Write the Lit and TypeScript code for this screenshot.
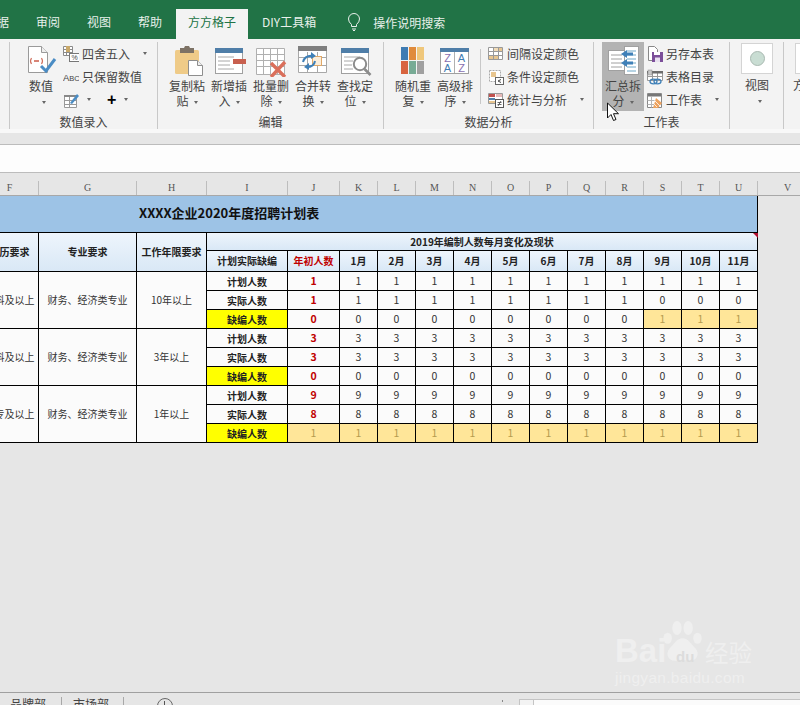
import { LitElement, css, html, svg } from "lit";
import { customElement } from "lit/decorators.js";

const arrow = html`<i class="arrow"></i>`;

/** Ribbon icons, keyed by name. Coordinates are screen pixels inside the icon box. */
const bigIcons = {
  value: svg`<path d="M6.5 1.5h13l6 6v20h-19z" fill="#fff" stroke="#9a9a9a"/><path d="M19.5 1.5v6h6" fill="#eee" stroke="#9a9a9a"/>
    <path d="M9.5 13q-2 3 0 6M19.5 13q2 3 0 6" fill="none" stroke="#d0705f" stroke-width="1.2"/><path d="M12 16h5" stroke="#c8503c" stroke-width="1.4"/>
    <path d="M19 21l5 5 9-12" fill="none" stroke="#4a8cc4" stroke-width="3"/>`,
  paste: svg`<g transform="translate(5 1)"><rect x="2" y="4" width="24" height="24" rx="1.5" fill="#efcb88"/><path d="M7 2h4l1-2h4l1 2h4v5H7z" fill="#7d7265"/>
    <path d="M15.500 14.500h9l5 5v10h-14z" fill="#fff" stroke="#8e8e8e"/><path d="M24.500 14.500v5h5" fill="#eee" stroke="#8e8e8e"/></g>`,
  insert: svg`<rect x="5.5" y="3.5" width="27" height="25" fill="#fff" stroke="#a0a0a0"/><rect x="5" y="3" width="28" height="5" fill="#4f7ea8"/>
    <path d="M8 12h16M8 16h12M8 20h12M8 24h16" stroke="#a8a8a8"/><rect x="23" y="14" width="13" height="5" fill="#c8604f"/>`,
  remove: svg`<path d="M4.5 3.500h28v26h-28zM4.5 9.500h28M4.5 15.500h28M4.5 21.500h28M11.500 3.500v26M18.500 3.500v26M25.500 3.500v26" fill="#fff" stroke="#b0b0b0"/>
    <path d="M19 18l14 14M33 17L19 32" stroke="#da6f5b" stroke-width="3.4" fill="none"/>`,
  merge: svg`<path d="M4.500 2.500h28v25h-28zM4.500 12.500h28M4.500 20.500h28M13.500 7v20.500M23.500 7v20.500" fill="#fff" stroke="#a8a8a8"/><rect x="4" y="1" width="29" height="5" fill="#7f7f7f"/>
    <rect x="18.500" y="11.500" width="9" height="9" fill="#fbeedb" stroke="#e0a868"/>
    <path d="M9 17q2-7 10-6" fill="none" stroke="#3f80b8" stroke-width="2"/><path d="M17 7l5 4-5 3z" fill="#3f80b8"/>
    <path d="M21 16q-1 6-8 6" fill="none" stroke="#3f80b8" stroke-width="2"/><path d="M15 18l-5 4 5 3z" fill="#3f80b8"/>`,
  find: svg`<rect x="5.500" y="3.500" width="27" height="25" fill="#fff" stroke="#a0a0a0"/><rect x="5" y="3" width="28" height="5" fill="#4f7ea8"/>
    <path d="M8 12h16M8 16h9M8 20h8M8 24h9" stroke="#a8a8a8"/><circle cx="24" cy="19" r="6.200" fill="#fff" stroke="#8c8c8c" stroke-width="2"/>
    <path d="M28.500 24l6 6" stroke="#8c8c8c" stroke-width="2.600"/>`,
  shuffle: svg`<rect x="7" y="2" width="7" height="13" fill="#3f7cb3"/><rect x="15" y="2" width="7" height="13" fill="#e08b3c"/><rect x="23" y="2" width="7" height="13" fill="#efc77b"/>
    <rect x="7" y="16" width="7" height="13" fill="#d8643f"/><rect x="15" y="16" width="7" height="13" fill="#78ab95"/><rect x="23" y="16" width="7" height="13" fill="#a0a0a0"/>`,
  sort: svg`<rect x="4.500" y="3.500" width="28" height="25" fill="#fff" stroke="#a0a0a0"/><rect x="4" y="3" width="29" height="4" fill="#4f7ea8"/><path d="M18.500 7v21" stroke="#b0b0b0"/>
    <g font-family="Liberation Sans" font-size="11" text-anchor="middle"><text x="11.500" y="16.500" fill="#8a6fb0">Z</text><text x="25.500" y="16.500" fill="#3f7cb3">A</text><text x="11.500" y="27" fill="#3f7cb3">A</text><text x="25.500" y="27" fill="#8a6fb0">Z</text></g>`,
  split: svg`<rect x="4.500" y="5.500" width="16" height="20" fill="#fff" stroke="#a0a0a0"/><path d="M7 10h11M7 14h11M7 18h11M7 22h11" stroke="#a0a0a0"/>
    <rect x="20.500" y="1.500" width="14" height="28" fill="#fff" stroke="#a0a0a0"/><path d="M23 6h9M23 10h9M23 14h9M23 18h9M23 22h9M23 26h9" stroke="#6fa8c8"/>
    <path d="M29 9h-8M29 18h-8" stroke="#3f80b8" stroke-width="3"/><path d="M23 5l-6 4 6 4zM23 14l-6 4 6 4z" fill="#3f80b8"/>`,
};

const smallIcons = {
  round: svg`<path d="M.5.5h9v9h-9zM.5 3.500h9M.5 6.500h9M3.500.500v9M6.500.500v9" fill="#fff" stroke="#8a8a8a"/><rect x="3" y="0" width="4" height="6" fill="#c9a96a"/>
    <rect x="6.500" y="7.500" width="10" height="8" fill="#fff" stroke="#777"/><text x="11.500" y="14" font-size="7" font-family="Liberation Sans" text-anchor="middle" fill="#444">%</text>`,
  abc: svg`<text x="0" y="12" font-size="9.500" font-family="Liberation Sans" fill="#444">A<tspan font-size="7.500">BC</tspan></text>`,
  edit: svg`<path d="M1.500 4.500h12v11h-12zM1.500 8.500h12M1.500 12.500h12M6.500 4.500v11" fill="#fff" stroke="#999"/><rect x="1" y="3" width="13" height="2" fill="#888"/>
    <path d="M7 11l7-9 2 2-7 8z" fill="#4a8cc4"/>`,
  banded: svg`<path d="M.5 1.500h14v12H.5zM.5 5.500h14M.5 9.500h14M5.500 1.500v12M10.500 1.500v12" fill="#fff" stroke="#999"/><rect x="1" y="10" width="4" height="3" fill="#e8c690"/><rect x="6" y="10" width="4" height="3" fill="#e8c690"/><rect x="11" y="2" width="3" height="3" fill="#e8c690"/><rect x="6" y="2" width="4" height="3" fill="#f1dcb8"/>`,
  rule: svg`<path d="M1.500 1.500h11v11h-11z" fill="#fff" stroke="#aaa" stroke-dasharray="2 1"/><rect x="3" y="3" width="5" height="5" fill="#e8c690"/><rect x="7.500" y="8.500" width="8" height="7" fill="#fff" stroke="#666"/><path d="M13 10.500l-3 1.500 3 1.500" fill="none" stroke="#444"/>`,
  stats: svg`<path d="M.5 1.500h14v10H.5z" fill="#fff" stroke="#999"/><rect x="1" y="2" width="6" height="3" fill="#c0504d"/><rect x="8" y="2" width="6" height="3" fill="#e6b8b7"/><rect x="1" y="6" width="6" height="2" fill="#4f7ea8"/><rect x="1" y="9" width="6" height="2" fill="#e8c690"/>
    <rect x="7.500" y="7.500" width="8" height="8" fill="#fff" stroke="#555"/><path d="M9.500 10.500h4M9.500 12.500h4M10 14l3-5" stroke="#444" stroke-width=".8" fill="none"/>`,
  saveAs: svg`<path d="M1.500.500h6l3 3v11h-9z" fill="#fff" stroke="#888"/><rect x="5" y="6" width="11" height="10" fill="#7c4f9a"/><rect x="7" y="6" width="6" height="3" fill="#fff"/><rect x="8" y="11.500" width="5" height="4.500" fill="#e8e0ef"/>`,
  catalog: svg`<path d="M.5 2.500h15v9H.5zM.5 7.500h15M5.500 2.500v9M10.500 2.500v9" fill="#fff" stroke="#999"/><rect x="0" y="2" width="16" height="2.500" fill="#6d6d6d"/><rect x="1" y="1" width="4" height="5" fill="#c8c8c8" stroke="#888" stroke-width=".5"/>
    <ellipse cx="6.500" cy="12.500" rx="3.500" ry="2.300" fill="none" stroke="#3f80b8" stroke-width="1.300"/><ellipse cx="10.500" cy="12.500" rx="3.500" ry="2.300" fill="none" stroke="#3f80b8" stroke-width="1.300"/>`,
  sheet: svg`<path d="M.5 1.500h14v14H.5z" fill="#fff" stroke="#888"/><rect x="1" y="2" width="13" height="2.500" fill="#777"/><path d="M.5 8.500h7M.5 12.500h7M4.500 4.500v11" stroke="#b5b5b5"/>
    <path d="M9 6l6 5-4 5H6z" fill="#eda35f"/><path d="M8 9l5 5M7 12l3 3" stroke="#fff" stroke-width=".8"/>`,
};

const big = (icon: keyof typeof bigIcons, l1: string, l2: string) => html`
  <div class="big">
    <svg class="big-icon" width="38" height="32" viewBox="0 0 38 32">${bigIcons[icon]}</svg>
    <div class="big-label">${l1}<br />${l2}${arrow}</div>
  </div>
`;

const small = (icon: keyof typeof smallIcons, label: string, more = false) => html`
  <div class="small">
    <svg width="16" height="16" viewBox="0 0 16 16">${smallIcons[icon]}</svg>
    <span>${label}</span>${more ? html`<i class="arrow far"></i>` : ""}
  </div>
`;

const blocks = [
  { major: "本科及以上", years: "10年以上", rows: [
    ["计划人数", 1, [1, 1, 1, 1, 1, 1, 1, 1, 1, 1, 1]],
    ["实际人数", 1, [1, 1, 1, 1, 1, 1, 1, 1, 0, 0, 0]],
    ["缺编人数", 0, [0, 0, 0, 0, 0, 0, 0, 0, 1, 1, 1]],
  ] },
  { major: "本科及以上", years: "3年以上", rows: [
    ["计划人数", 3, [3, 3, 3, 3, 3, 3, 3, 3, 3, 3, 3]],
    ["实际人数", 3, [3, 3, 3, 3, 3, 3, 3, 3, 3, 3, 3]],
    ["缺编人数", 0, [0, 0, 0, 0, 0, 0, 0, 0, 0, 0, 0]],
  ] },
  { major: "大专及以上", years: "1年以上", rows: [
    ["计划人数", 9, [9, 9, 9, 9, 9, 9, 9, 9, 9, 9, 9]],
    ["实际人数", 8, [8, 8, 8, 8, 8, 8, 8, 8, 8, 8, 8]],
    ["缺编人数", 1, [1, 1, 1, 1, 1, 1, 1, 1, 1, 1, 1]],
  ] },
] as { major: string; years: string; rows: [string, number, number[]][] }[];

const letters = ["F", "G", "H", "I", "J", "K", "L", "M", "N", "O", "P", "Q", "R", "S", "T", "U", "V"];
const months = ["1月", "2月", "3月", "4月", "5月", "6月", "7月", "8月", "9月", "10月", "11月"];

@customElement("app-root")
export class AppRoot extends LitElement {
  static styles = css`
    :host {
      display: block;
      position: relative;
      width: 800px;
      height: 705px;
      overflow: hidden;
      background: #e6e6e6;
      color: #444;
      font: 12px/15px "Noto Sans CJK SC", "Liberation Sans", sans-serif;
      --cols: 58px 98px 70px 81px 52px repeat(11, 38px);
    }

    /* title bar and tabs */
    .tabs {
      display: flex;
      align-items: flex-end;
      gap: 1px;
      height: 39px;
      margin-left: -28px;
      background: #217346;
      color: #e8f0eb;
    }
    .tab {
      height: 30px;
      padding: 0 13px;
      line-height: 25px;
      white-space: nowrap;
    }
    .tab.on {
      padding: 0 12px;
      background: #f3f3f3;
      color: #217346;
    }
    .search {
      display: flex;
      align-items: center;
      gap: 13px;
      height: 30px;
      padding: 0 0 4px 18px;
      box-sizing: border-box;
    }

    /* ribbon */
    .ribbon {
      display: flex;
      height: 87px;
      padding-top: 3px;
      background: #f3f3f3;
    }
    .group {
      display: flex;
      flex: none;
      flex-direction: column;
      box-sizing: border-box;
      height: 87px;
      border-right: 1px solid #c8c8c8;
    }
    .group-body {
      display: flex;
      height: 73px;
    }
    .group-label {
      height: 14px;
      line-height: 14px;
      text-align: center;
    }
    .g0 { width: 10px; }
    .g1 { width: 148px; }
    .g2 { width: 226px; }
    .g3 { width: 210px; }
    .g4 { width: 136px; }
    .g5 { width: 54px; }
    .g6 { width: 60px; border: 0; }
    .g1 .group-body, .g2 .group-body, .g3 .group-body, .g4 .group-body { padding-left: 8px; }
    .g1 .group-body { padding-left: 10px; }

    .big {
      flex: none;
      box-sizing: border-box;
      width: 42px;
      height: 69px;
      padding-top: 3px;
      text-align: center;
    }
    .big.hot { background: #b3b3b3; }
    .big-icon {
      display: block;
      margin: 0 auto 1px;
    }
    .big-label { white-space: nowrap; }
    .arrow {
      display: inline-block;
      width: 0;
      height: 0;
      margin-left: 5px;
      vertical-align: 2px;
      border: 2.500px solid transparent;
      border-top: 3px solid #666;
      border-bottom: 0;
    }
    .arrow.far { margin-left: 10px; }

    .stack {
      display: flex;
      flex-direction: column;
      flex: none;
    }
    .small {
      display: flex;
      align-items: center;
      gap: 3px;
      height: 23px;
      white-space: nowrap;
    }
    .small svg { flex: none; }
    .g1 .stack { margin-left: 1px; }
    .g4 .stack { margin-left: 3px; }
    .tools { display: flex; align-items: center; }
    .tools .plus {
      margin-left: 13px;
      font: bold 16px/16px "Liberation Sans", sans-serif;
      color: #000;
    }
    .rule {
      flex: none;
      width: 1px;
      height: 55px;
      margin: 7px 7px 0 4px;
      background: #c8c8c8;
    }
    .view {
      width: 42px;
      margin-left: 6px;
      text-align: center;
    }
    .view-box {
      box-sizing: border-box;
      display: flex;
      align-items: center;
      justify-content: center;
      width: 32px;
      height: 31px;
      margin: 1px auto 3px;
      background: #fff;
      border: 1px solid #d4d4d4;
    }
    .view-dot {
      width: 13px;
      height: 13px;
      border-radius: 50%;
      background: #c9ddd3;
      border: 1px solid #a9b9b1;
    }
    .g6 .view { margin-left: 9px; text-align: left; white-space: nowrap; }
    .g6 .view-box { margin-left: 2px; }

    /* formula bar */
    .strip {
      height: 4px;
      background: #f8f8f8;
    }
    .band {
      height: 11px;
      background: #e6e6e6;
      border-bottom: 1px solid #bcbcbc;
    }
    .formula {
      height: 27px;
      background: #fdfdfd;
      border-bottom: 1px solid #bcbcbc;
    }

    /* column letters */
    .letters {
      display: grid;
      grid-template-columns: var(--cols) 60px;
      height: 22px;
      margin-left: -19px;
      align-items: end;
      border-bottom: 1px solid #a8a8a8;
      font: 10px/14px "Liberation Serif", serif;
      color: #555;
    }
    .letters div {
      box-sizing: border-box;
      height: 14px;
      border-right: 1px solid #bdbdbd;
      text-align: center;
    }

    /* sheet */
    .sheet {
      height: 496px;
    }
    .table {
      position: relative;
      display: grid;
      grid-template-columns: var(--cols);
      grid-template-rows: 37px 18px 21px repeat(9, 19px);
      width: max-content;
      margin-left: -19px;
      font-size: 10px;
      line-height: 12px;
      color: #333;
    }
    .cell {
      display: flex;
      align-items: center;
      justify-content: center;
      box-sizing: border-box;
      border-right: 1px solid #000;
      border-bottom: 1px solid #000;
      background: #fbfbfb;
      white-space: nowrap;
    }
    .cell.title {
      grid-column: 1 / -1;
      justify-content: flex-start;
      padding: 0 0 2px 158px;
      background: #9dc3e6;
      font-size: 13px;
      font-weight: 700;
      color: #111;
    }
    .cell.head {
      background: linear-gradient(#eef5fc, #d9e8f6);
      font-weight: 700;
      color: #222;
    }
    .cell.tall { grid-row: span 2; }
    .cell.wide { grid-column: span 13; }
    .cell.span3 { grid-row: span 3; }
    .cell.label {
      padding-top: 2px;
      font-weight: 700;
      color: #222;
    }
    .cell.lack { background: #ffff00; }
    .cell.red {
      font-size: 10.500px;
      font-weight: 700;
      color: #c00000;
    }
    .cell.head.red { font-size: 10px; }
    .cell.num { font-size: 10.500px; }
    .cell.warn {
      background: #ffe699;
      color: #b59b4f;
      font-size: 10.500px;
      font-weight: 400;
    }
    .corner {
      position: absolute;
      top: 37px;
      right: 0;
      width: 0;
      height: 0;
      border-top: 5px solid #b01030;
      border-left: 5px solid transparent;
    }

    /* sheet tabs */
    .footer {
      display: flex;
      align-items: flex-start;
      height: 12px;
      border-top: 1px solid #a0a0a0;
      overflow: hidden;
    }
    .sheet-tab {
      box-sizing: border-box;
      flex: none;
      width: 62px;
      height: 8px;
      margin-top: 4px;
      padding-left: 10px;
      border-right: 1px solid #a8a8a8;
      line-height: 13px;
    }
    .sheet-tab + .sheet-tab { padding-left: 11px; width: 62px; }
    .add {
      position: relative;
      box-sizing: border-box;
      flex: none;
      width: 16px;
      height: 16px;
      margin: 5px 0 0 33px;
      border: 1px solid #666;
      border-radius: 50%;
    }
    .add::before {
      content: "";
      position: absolute;
      left: 6px;
      top: 2px;
      width: 1px;
      height: 10px;
      background: #555;
    }
    .dots {
      flex: none;
      width: 1px;
      height: 2px;
      margin: 7px 0 0 329px;
      background: #888;
    }
    .scroll {
      flex: 1;
      box-sizing: border-box;
      height: 12px;
      margin: 6px 0 0 16px;
      background: #fbfbfb;
      border: 1px solid #c4c4c4;
      border-right: 0;
      display: flex;
    }
    .scroll b {
      box-sizing: border-box;
      width: 14px;
      border-right: 1px solid #c4c4c4;
      background: #f3f3f3;
    }

    /* overlays */
    .cursor {
      position: absolute;
      left: 606px;
      top: 102px;
    }
    .mark {
      position: absolute;
      left: 615px;
      top: 620px;
      width: 142px;
      height: 68px;
      color: #efefef;
    }
    .mark-bai {
      position: absolute;
      left: 0;
      top: 14px;
      font: 700 33px/34px "Liberation Sans", sans-serif;
    }
    .mark-paw {
      position: absolute;
      left: 48px;
      top: -1px;
    }
    .mark-du {
      position: absolute;
      left: 61px;
      top: 29px;
      font: 700 15px/16px "Liberation Sans", sans-serif;
      color: #dcdcdc;
    }
    .mark-jy {
      position: absolute;
      left: 90px;
      top: 19px;
      font: 400 23.500px/26px "Noto Sans CJK SC", sans-serif;
    }
    .mark-url {
      position: absolute;
      left: 0;
      top: 49px;
      font: 15.500px/18px "Liberation Sans", sans-serif;
      letter-spacing: .3px;
      white-space: nowrap;
    }
  `;

  private renderRibbon() {
    return html`
      <div class="ribbon">
        <div class="group g0"></div>
        <div class="group g1">
          <div class="group-body">
            ${big("value", "数值", "")}
            <div class="stack">
              ${small("round", "四舍五入", true)}
              ${small("abc", "只保留数值")}
              <div class="small tools">
                <svg width="16" height="16" viewBox="0 0 16 16">${smallIcons.edit}</svg>
                ${arrow}<span class="plus">+</span>${arrow}
              </div>
            </div>
          </div>
          <div class="group-label">数值录入</div>
        </div>
        <div class="group g2">
          <div class="group-body">
            ${big("paste", "复制粘", "贴")}
            ${big("insert", "新增插", "入")}
            ${big("remove", "批量删", "除")}
            ${big("merge", "合并转", "换")}
            ${big("find", "查找定", "位")}
          </div>
          <div class="group-label">编辑</div>
        </div>
        <div class="group g3">
          <div class="group-body">
            ${big("shuffle", "随机重", "复")}
            ${big("sort", "高级排", "序")}
            <div class="rule"></div>
            <div class="stack">
              ${small("banded", "间隔设定颜色")}
              ${small("rule", "条件设定颜色")}
              ${small("stats", "统计与分析", true)}
            </div>
          </div>
          <div class="group-label">数据分析</div>
        </div>
        <div class="group g4">
          <div class="group-body">
            <div class="big hot">
              <svg class="big-icon" width="38" height="32" viewBox="0 0 38 32">${bigIcons.split}</svg>
              <div class="big-label">汇总拆<br />分${arrow}</div>
            </div>
            <div class="stack">
              ${small("saveAs", "另存本表")}
              ${small("catalog", "表格目录")}
              ${small("sheet", "工作表", true)}
            </div>
          </div>
          <div class="group-label">工作表</div>
        </div>
        <div class="group g5">
          <div class="group-body">
            <div class="view">
              <div class="view-box"><div class="view-dot"></div></div>
              视图<br />${arrow}
            </div>
          </div>
        </div>
        <div class="group g6">
          <div class="group-body">
            <div class="view">
              <div class="view-box"></div>
              方方格子
            </div>
          </div>
        </div>
      </div>
    `;
  }

  private renderTable() {
    return html`
      <div class="table">
        <div class="cell title">XXXX企业2020年度招聘计划表</div>
        <div class="cell head tall">学历要求</div>
        <div class="cell head tall">专业要求</div>
        <div class="cell head tall">工作年限要求</div>
        <div class="cell head wide">2019年编制人数每月变化及现状</div>
        <div class="cell head">计划实际缺编</div>
        <div class="cell head red">年初人数</div>
        ${months.map((m) => html`<div class="cell head">${m}</div>`)}
        ${blocks.map(
          (b) => html`
            <div class="cell span3">${b.major}</div>
            <div class="cell span3">财务、经济类专业</div>
            <div class="cell span3">${b.years}</div>
            ${b.rows.map(([label, first, values]) => {
              const lack = label === "缺编人数";
              return html`
                <div class="cell label ${lack ? "lack" : ""}">${label}</div>
                <div class="cell red ${lack && first > 0 ? "warn" : ""}">${first}</div>
                ${values.map(
                  (v) => html`<div class="cell num ${lack && v > 0 ? "warn" : ""}">${v}</div>`
                )}
              `;
            })}
          `
        )}
        <i class="corner"></i>
      </div>
    `;
  }

  render() {
    return html`
      <div class="tabs">
        <div class="tab">数据</div>
        <div class="tab">审阅</div>
        <div class="tab">视图</div>
        <div class="tab">帮助</div>
        <div class="tab on">方方格子</div>
        <div class="tab">DIY工具箱</div>
        <div class="search">
          <svg width="12" height="18" viewBox="0 0 12 18" fill="none" stroke="#e8f0eb">
            <path d="M3.500 11.500Q.5 9 .5 6a5.500 5.500 0 0 1 11 0q0 3-3 5.500v2h-5z" />
            <path d="M4 16h4M5 17.500h2" />
          </svg>
          <span>操作说明搜索</span>
        </div>
      </div>
      ${this.renderRibbon()}
      <div class="strip"></div>
      <div class="band"></div>
      <div class="formula"></div>
      <div class="letters">${letters.map((l) => html`<div>${l}</div>`)}</div>
      <div class="sheet">${this.renderTable()}</div>
      <div class="footer">
        <div class="sheet-tab">品牌部</div>
        <div class="sheet-tab">市场部</div>
        <div class="add"></div>
        <div class="dots"></div>
        <div class="scroll"><b></b></div>
      </div>
      <svg class="cursor" width="14" height="20" viewBox="0 0 14 20">
        <path d="M1.500 1v15l3.500-3.500 2.500 6 2.500-1-2.500-5.800h5z" fill="#fff" stroke="#111" />
      </svg>
      <div class="mark">
        <div class="mark-bai">Bai</div>
        <svg class="mark-paw" width="41" height="46" viewBox="0 0 44 48" fill="#efefef">
          <ellipse cx="5" cy="20" rx="4.500" ry="6" />
          <ellipse cx="15" cy="9" rx="5" ry="7.500" />
          <ellipse cx="27" cy="9" rx="5" ry="7.500" />
          <ellipse cx="37" cy="20" rx="4.500" ry="6" />
          <path d="M21 20c6 0 9 6 14 11 5 6 1 14-7 13-3 0-5-1-7-1s-4 1-7 1c-8 1-12-7-7-13 5-5 8-11 14-11z" />
        </svg>
        <div class="mark-du">du</div>
        <div class="mark-jy">经验</div>
        <div class="mark-url">jingyan.baidu.com</div>
      </div>
    `;
  }
}

declare global {
  interface HTMLElementTagNameMap {
    "app-root": AppRoot;
  }
}
